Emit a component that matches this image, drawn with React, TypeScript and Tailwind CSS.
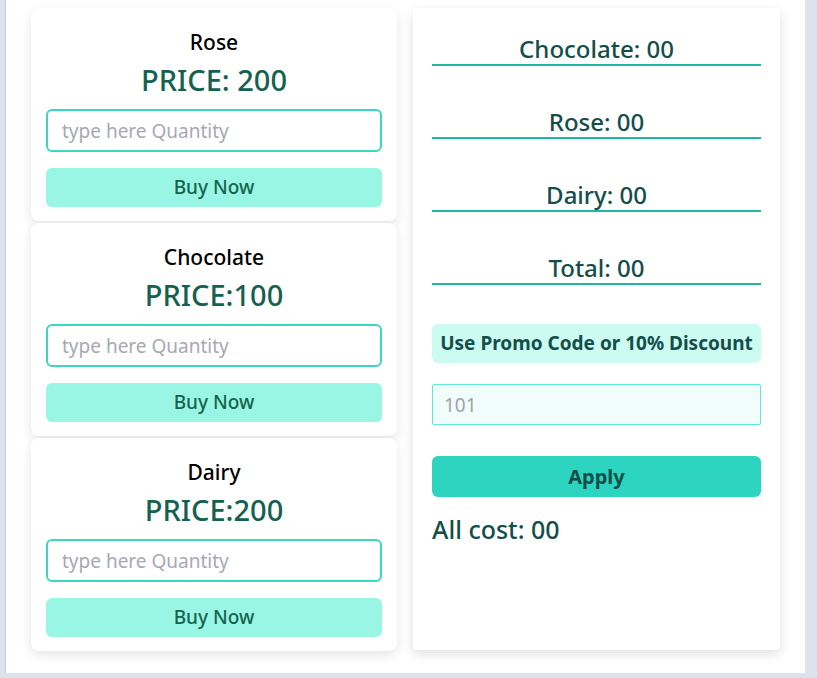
import { useState } from "react"

const products = [
    { name: "Rose", price: "PRICE: 200" },
    { name: "Chocolate", price: "PRICE:100" },
    { name: "Dairy", price: "PRICE:200" },
]

export default function App() {
    const [promo, setPromo] = useState("")

    return (
        <div className="w-[817px] h-[678px] bg-[#dde3ed] font-['Noto_Sans',sans-serif] overflow-hidden">
            <div className="ml-[5px] w-[800px] h-[673px] bg-white border-l border-l-[#c9ced8] flex gap-[16px] pl-[25px] pt-[8px]">
                <div className="w-[366px] flex flex-col gap-[2px]">
                    {products.map((item, index) => (
                        <ProductCard name={item.name} price={item.price} key={index} />
                    ))}
                </div>
                <div className="w-[367px] h-[642px] bg-white rounded-[4px] shadow-[0_4px_12px_rgba(0,0,0,0.12)] px-[19px] pt-[26px]">
                    <Line title="Chocolate: 00" first />
                    <Line title="Rose: 00" />
                    <Line title="Dairy: 00" />
                    <Line title="Total: 00" />
                    <div className="mt-[39px] h-[39px] bg-[#ccfbf1] rounded-[6px] flex items-center justify-center text-[#134e4a] text-[19px] font-[700]">
                        Use Promo Code or 10% Discount
                    </div>
                    <input
                        value={promo}
                        onChange={(e) => setPromo(e.target.value)}
                        placeholder="101"
                        className="mt-[21px] w-full h-[41px] bg-[#f0fdfa] border border-[#5eead4] rounded-[2px] px-[11px] text-[19px] outline-none placeholder:text-[#a3a3a3]"
                    />
                    <button className="mt-[31px] w-full h-[41px] bg-[#2dd4bf] rounded-[6px] text-[#134e4a] text-[20px] font-[700]">
                        Apply
                    </button>
                    <p className="mt-[16px] text-[#134e4a] text-[25px] font-[500] leading-[32px]">All cost: 00</p>
                </div>
            </div>
        </div>
    )
}

function Line({ title, first }: { title: string, first?: boolean }) {
    return (
        <h2 className={`text-center text-[#134e4a] text-[24px] font-[500] leading-[30px] border-b-2 border-b-[#20b8a4] ${first ? "" : "mt-[41px]"}`}>
            {title}
        </h2>
    )
}

function ProductCard({ name, price }: { name: string, price: string }) {
    return (
        <div className="h-[213px] bg-white rounded-[8px] shadow-[0_4px_12px_rgba(0,0,0,0.1)] px-[15px] pt-[19px] flex flex-col">
            <h3 className="text-center text-black text-[21px] font-[500] leading-[30px]">{name}</h3>
            <p className="text-center text-[#14614f] text-[29px] font-[500] leading-[36px] mt-[5px]">{price}</p>
            <input
                placeholder="type here Quantity"
                className="mt-[11px] w-full h-[43px] border-2 border-[#3dd6c0] rounded-[6px] px-[14px] text-[19px] outline-none placeholder:text-[#a8a8b3]"
            />
            <button className="mt-[16px] w-full h-[39px] bg-[#99f6e4] rounded-[6px] text-[#16634f] text-[19px] font-[500]">
                Buy Now
            </button>
        </div>
    )
}
